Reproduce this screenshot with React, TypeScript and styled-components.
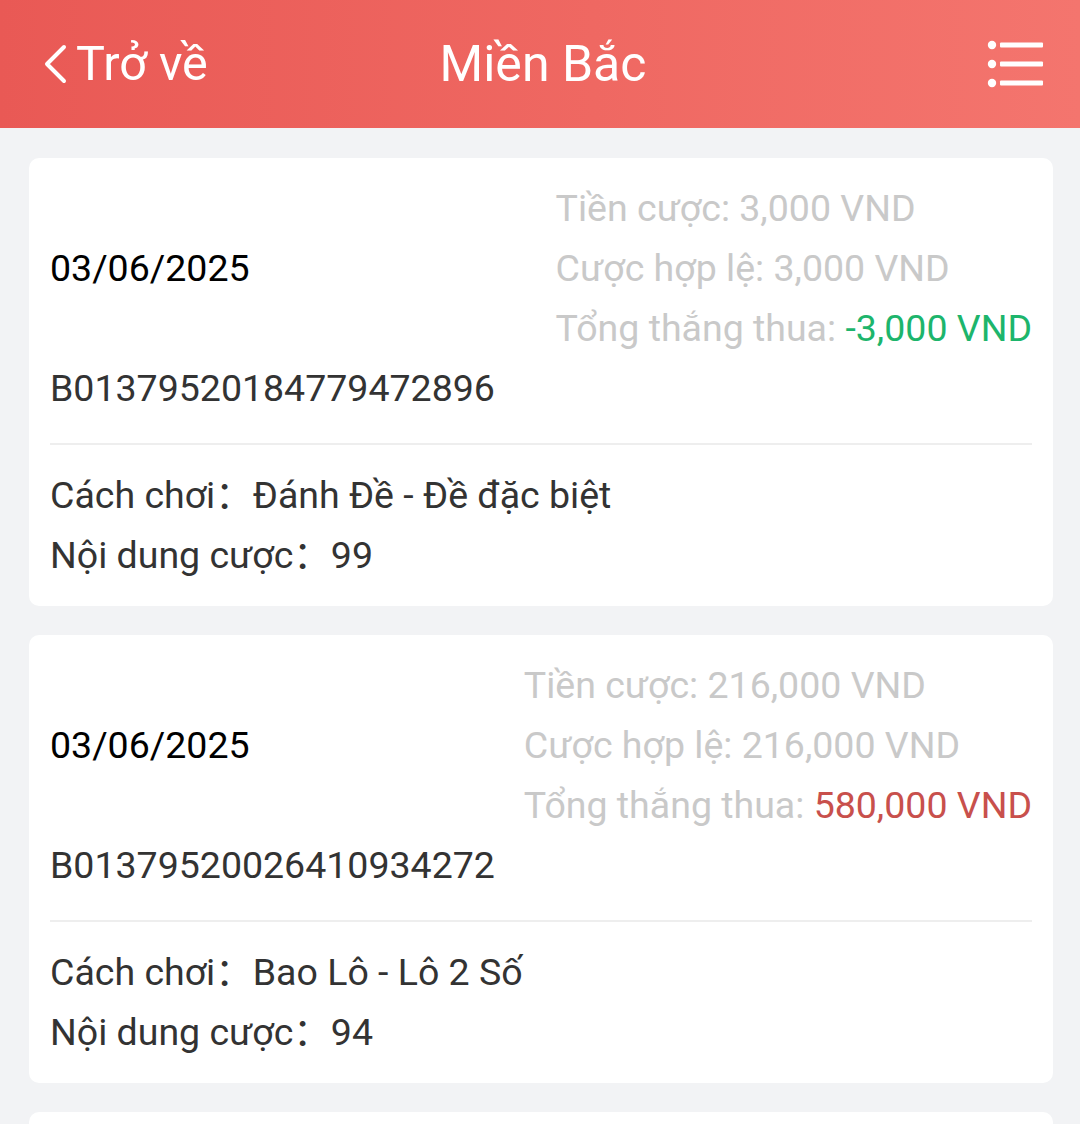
import React from 'react';
import styled, { createGlobalStyle } from 'styled-components';

type Bet = {
	date: string;
	id: string;
	stake: string;
	valid: string;
	result: string;
	win: boolean;
	game: string;
	content: string;
};

const bets: Bet[] = [
	{
		date: '03/06/2025',
		id: 'B01379520184779472896',
		stake: '3,000 VND',
		valid: '3,000 VND',
		result: '-3,000 VND',
		win: false,
		game: 'Đánh Đề - Đề đặc biệt',
		content: '99',
	},
	{
		date: '03/06/2025',
		id: 'B01379520026410934272',
		stake: '216,000 VND',
		valid: '216,000 VND',
		result: '580,000 VND',
		win: true,
		game: 'Bao Lô - Lô 2 Số',
		content: '94',
	},
	{
		date: '03/06/2025',
		id: 'B01379519987312345088',
		stake: '27,000 VND',
		valid: '27,000 VND',
		result: '-27,000 VND',
		win: false,
		game: 'Bao Lô - Lô 2 Số',
		content: '38',
	},
];

const GlobalStyle = createGlobalStyle`
	html, body {
		margin: 0;
		padding: 0;
		background: #f2f3f5;
		font-family: Roboto, "Noto Sans", sans-serif;
	}
	* {
		box-sizing: border-box;
	}
`;

const Page = styled.div`
	min-height: 100vh;
	background: #f2f3f5;
`;

const Header = styled.header`
	height: 128px;
	display: grid;
	grid-template-columns: 1fr auto 1fr;
	align-items: center;
	padding: 0 36px 0 42px;
	background: linear-gradient(90deg, #e95955 0%, #ef6862 55%, #f4756e 100%);
	color: #fff;
`;

const BackButton = styled.button`
	justify-self: start;
	display: flex;
	align-items: center;
	gap: 8px;
	padding: 0;
	border: 0;
	background: none;
	color: #fff;
	font-family: inherit;
	font-size: 48.5px;
	line-height: 1;
	cursor: pointer;
`;

const Title = styled.h1`
	margin: 0;
	font-size: 50px;
	font-weight: 400;
	line-height: 1;
`;

const MenuButton = styled.button`
	justify-self: end;
	display: flex;
	padding: 0;
	border: 0;
	background: none;
	cursor: pointer;
`;

const List = styled.main`
	display: flex;
	flex-direction: column;
	gap: 29px;
	padding: 30px 27px 30px 29px;
`;

const Card = styled.section`
	background: #fff;
	border-radius: 10px;
	padding: 20px 21px 21px;
`;

const TopRow = styled.div`
	display: flex;
	justify-content: space-between;
	align-items: center;
`;

const Line = styled.div<{ $tone?: 'dark' | 'muted' | 'black' }>`
	height: 60px;
	font-size: 37.5px;
	line-height: 60px;
	white-space: nowrap;
	color: ${({ $tone }) =>
		$tone === 'black' ? '#000' : $tone === 'muted' ? '#c9c9c9' : '#333'};
`;

const Amounts = styled.div`
	display: flex;
	flex-direction: column;
`;

const Result = styled.span<{ $win: boolean }>`
	color: ${({ $win }) => ($win ? '#c8504c' : '#1db56c')};
`;

/* full-width colon, set in the SC face so it sits on the left of its cell */
const Colon = styled.span`
	display: inline-block;
	line-height: 1;
	font-family: "Noto Sans CJK SC", sans-serif;
`;

const Divider = styled.hr`
	margin: 25px 0 20px;
	border: 0;
	height: 2px;
	background: #eeeeee;
`;

const ChevronLeft = () => (
	<svg width="26" height="40" viewBox="0 0 26 40" fill="none">
		<path d="M22 3 L5 20 L22 37" stroke="#fff" strokeWidth="4" strokeLinecap="round" strokeLinejoin="round" />
	</svg>
);

const ListIcon = () => (
	<svg width="58" height="48" viewBox="0 0 58 48" fill="#fff">
		<circle cx="6" cy="5" r="4.2" />
		<circle cx="6" cy="24" r="4.2" />
		<circle cx="6" cy="43" r="4.2" />
		<rect x="14" y="2.5" width="43" height="5" rx="1" />
		<rect x="14" y="21.5" width="43" height="5" rx="1" />
		<rect x="14" y="40.5" width="43" height="5" rx="1" />
	</svg>
);

const BetCard = ({ bet }: { bet: Bet }) => (
	<Card>
		<TopRow>
			<Line $tone="black">{bet.date}</Line>
			<Amounts>
				<Line $tone="muted">Tiền cược: {bet.stake}</Line>
				<Line $tone="muted">Cược hợp lệ: {bet.valid}</Line>
				<Line $tone="muted">
					Tổng thắng thua: <Result $win={bet.win}>{bet.result}</Result>
				</Line>
			</Amounts>
		</TopRow>
		<Line>{bet.id}</Line>
		<Divider />
		<Line>
			Cách chơi<Colon>：</Colon>
			{bet.game}
		</Line>
		<Line>
			Nội dung cược<Colon>：</Colon>
			{bet.content}
		</Line>
	</Card>
);

const App = () => {
	return (
		<Page>
			<GlobalStyle />
			<Header>
				<BackButton>
					<ChevronLeft />
					Trở về
				</BackButton>
				<Title>Miền Bắc</Title>
				<MenuButton aria-label="Menu">
					<ListIcon />
				</MenuButton>
			</Header>
			<List>
				{bets.map((bet) => (
					<BetCard key={bet.id} bet={bet} />
				))}
			</List>
		</Page>
	);
};

export default App;
